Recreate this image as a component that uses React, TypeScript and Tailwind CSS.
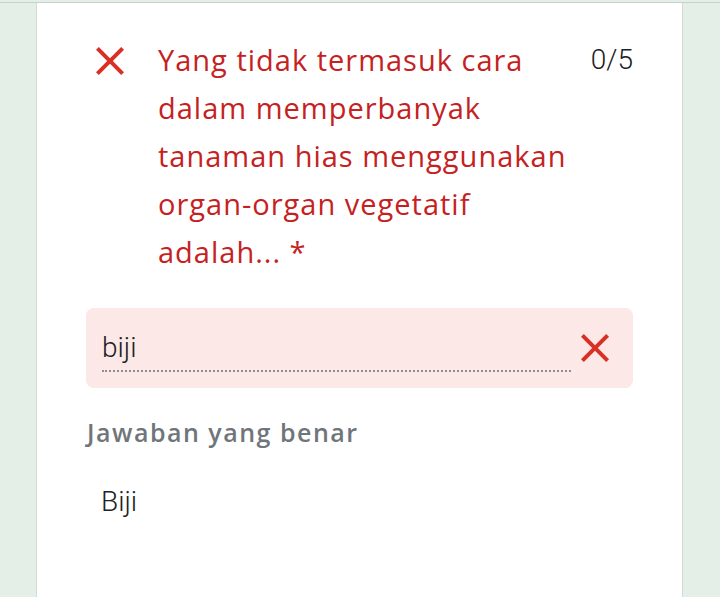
import React from "react";

function XIcon({ className }: { className?: string }) {
  return (
    <svg viewBox="0 0 24 24" className={className} fill="currentColor">
      <path d="M19 6.41 17.59 5 12 10.59 6.41 5 5 6.41 10.59 12 5 17.59 6.41 19 12 13.41 17.59 19 19 17.59 13.41 12z" />
    </svg>
  );
}

export default function App() {
  return (
    <div className="w-[720px] h-[597px] bg-[#e3efe7] flex flex-col overflow-hidden" style={{ fontFamily: "Roboto, 'Noto Sans', sans-serif" }}>
      <div className="h-[2px] shrink-0"></div>
      <div className="h-px bg-[#c9cfcb] shrink-0"></div>
      <div className="flex flex-1">
        <div className="w-[36px] shrink-0"></div>
        <div className="w-[647px] bg-white border-x border-[#d3dad5] flex flex-col px-[49px] pt-[33px]">
          <div className="flex">
            <div className="w-[72px] shrink-0 pt-[1px]">
              <XIcon className="w-[48px] h-[48px] text-[#d93025]" />
            </div>
            <div className="w-[414px] shrink-0 text-[#c5221f] text-[29px] leading-[48px] tracking-[1px] font-['Open_Sans',sans-serif]">
              Yang tidak termasuk cara dalam memperbanyak tanaman hias menggunakan organ-organ vegetatif adalah... *
            </div>
            <div className="flex-1 text-right text-[#202124] text-[28px] leading-[48px] font-light">0/5</div>
          </div>
          <div className="mt-[32px] h-[80px] rounded-[8px] bg-[#fce8e6] flex items-center pl-[16px] pr-[14px]">
            <div className="flex-1 flex flex-col pt-[6px]">
              <div className="text-[#202124] text-[28px] leading-[36px] font-light">biji</div>
              <div className="mt-[4px] border-b-[2px] border-dotted border-[#8a8f94]"></div>
            </div>
            <XIcon className="w-[48px] h-[48px] text-[#d93025] ml-[0px]" />
          </div>
          <div className="mt-[26px] text-[#70757a] text-[25px] leading-[36px] font-semibold tracking-[1.5px] pl-[1px] font-['Open_Sans',sans-serif]">Jawaban yang benar</div>
          <div className="mt-[34px] text-[#202124] text-[28px] leading-[36px] pl-[15px] font-light">Biji</div>
        </div>
      </div>
    </div>
  );
}
